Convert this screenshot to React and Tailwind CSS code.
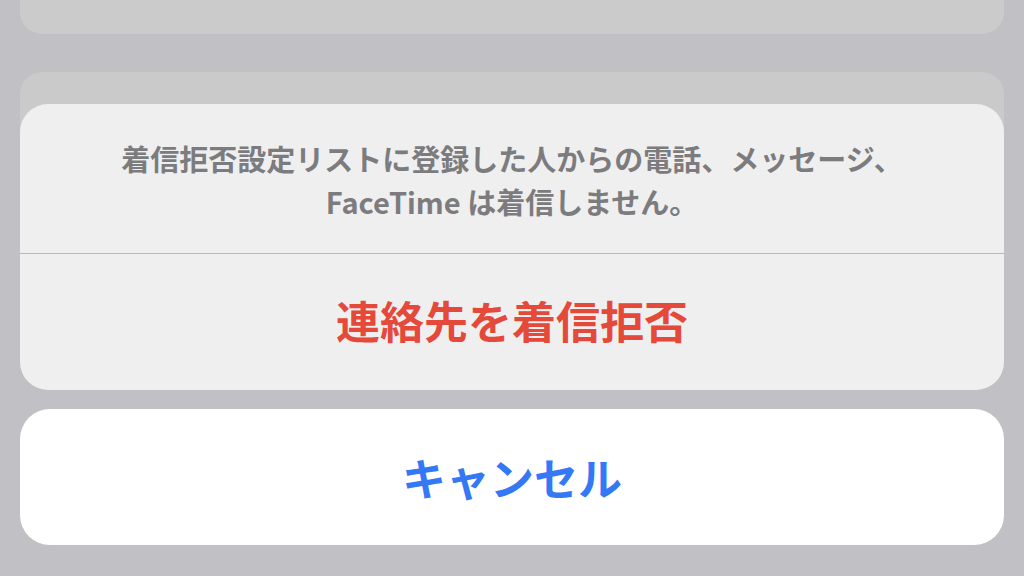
export default function App() {
  const font = { fontFamily: '"Noto Sans CJK JP", "Noto Sans", sans-serif' };
  return (
    <div className="h-[576px] w-[1024px] overflow-hidden bg-[#c1c0c5] px-[20px]" style={font}>
      <div className="h-[34px] rounded-b-[22px] bg-[#cbcbcb]" />
      <div className="mt-[38px] h-[60px] rounded-t-[22px] bg-[#cacaca]" />
      <div className="relative -mt-[28px] overflow-hidden rounded-[28px] bg-[#efeff0]">
        <div className="flex h-[149px] flex-col items-center justify-center pt-[2px] text-center text-[29px] font-bold leading-[43px] text-[#7c7c7e]">
          <p>着信拒否設定リストに登録した人からの電話、メッセージ、</p>
          <p>FaceTime は着信しません。</p>
        </div>
        <div className="h-px bg-[#b8b8ba]" />
        <button className="flex h-[136px] w-full items-center justify-center pb-[4px] text-[44px] font-bold text-[#e5493a]">
          連絡先を着信拒否
        </button>
      </div>
      <button className="mt-[19px] flex h-[136px] w-full items-center justify-center rounded-[30px] bg-white text-[44px] font-bold text-[#3478f6]">
        キャンセル
      </button>
    </div>
  );
}
